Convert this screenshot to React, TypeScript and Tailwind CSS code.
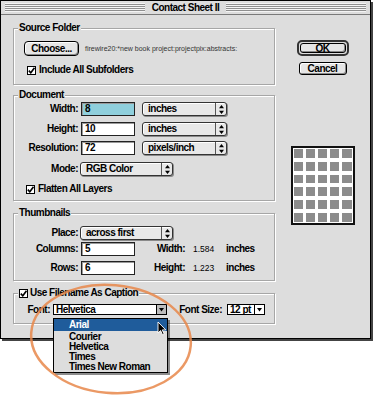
import React from 'react';

const stripes =
  'bg-[repeating-linear-gradient(to_bottom,#f4f4f4_0px,#f4f4f4_1px,#8f8f8f_1px,#8f8f8f_2px)]';

function Check() {
  return (
    <span className="flex h-[9px] w-[9px] shrink-0 items-center justify-center border border-black bg-white">
      <svg width="7" height="7" viewBox="0 0 7 7">
        <path d="M0.8 3.6 L2.8 5.8 L6.5 0.8" stroke="black" strokeWidth="1.6" fill="none" />
      </svg>
    </span>
  );
}

function UpDown() {
  return (
    <svg width="5" height="9" viewBox="0 0 5 9">
      <path d="M2.5 0 L5 3.2 H0 Z M0 5.8 H5 L2.5 9 Z" fill="black" />
    </svg>
  );
}

function DownArrow() {
  return (
    <svg width="5" height="4" viewBox="0 0 5 4">
      <path d="M0 0 H5 L2.5 3.5 Z" fill="black" />
    </svg>
  );
}

function Popup({ value, width }: { value: string; width: string }) {
  return (
    <div
      className={`flex h-[14px] ${width} items-stretch rounded-[3px] border border-[#333] bg-[#e8e8e8] shadow-[1px_1px_0_#8a8a8a,inset_1px_1px_0_#fff]`}
    >
      <span className="flex-1 overflow-hidden whitespace-nowrap pl-[5px] leading-[12px]">{value}</span>
      <span className="flex w-[11px] items-center justify-center border-l border-[#555]">
        <UpDown />
      </span>
    </div>
  );
}

function Field({ value, blue }: { value: string; blue?: boolean }) {
  return (
    <div
      className={`h-[14px] w-[54px] border border-[#222] pl-[3px] leading-[12px] shadow-[inset_1px_1px_0_#9a9a9a] ${
        blue ? 'bg-[#8fcfdc]' : 'bg-white'
      }`}
    >
      {value}
    </div>
  );
}

function Group({
  legend,
  className = '',
  children
}: {
  legend: React.ReactNode;
  className?: string;
  children: React.ReactNode;
}) {
  return (
    <fieldset
      className={`border border-[#a6a6a6] p-0 shadow-[inset_1px_1px_0_#fff,1px_1px_0_#fff] ${className}`}
    >
      <legend className="ml-[4px] bg-[#dddddd] px-[1px] leading-[12px]">{legend}</legend>
      {children}
    </fieldset>
  );
}

function Row({ label, children, className = '' }: { label: string; children: React.ReactNode; className?: string }) {
  return (
    <div className={`flex h-[14px] items-center ${className}`}>
      <span className="w-[64px] text-right">{label}</span>
      {children}
    </div>
  );
}

export default function App() {
  return (
    <div className="relative h-[395px] w-[376px] overflow-hidden bg-white font-['Liberation_Sans',Arial,sans-serif] text-[10px] font-bold leading-[12px] tracking-[-0.5px] text-black">
      <div className="flex h-[339px] w-[371px] flex-col border border-black bg-[#dddddd] shadow-[2px_2px_0_#444]">
        {/* title bar */}
        <div className="flex h-[14px] items-center gap-[5px] border-b border-[#7a7a7a] px-[4px]">
          <div className={`h-[9px] flex-1 ${stripes}`} />
          <span className="px-[2px]">Contact Sheet II</span>
          <div className={`h-[9px] flex-1 ${stripes}`} />
        </div>

        <div className="flex flex-1 pl-[12px] pt-[7px]">
          <div className="flex w-[262px] flex-col">
            {/* Source Folder */}
            <Group legend="Source Folder">
              <div className="px-[10px] pb-[8px] pt-[7px]">
                <div className="flex items-center">
                  <button className="h-[15px] w-[55px] rounded-[4px] border border-black bg-[#e6e6e6] leading-[12px] shadow-[inset_-1px_-1px_0_#8a8a8a,inset_1px_1px_0_#fff]">
                    Choose...
                  </button>
                  <span className="ml-[6px] whitespace-nowrap text-[7px] font-normal tracking-normal text-[#333]">
                    firewire20:*new book project:projectpix:abstracts:
                  </span>
                </div>
                <div className="ml-[3px] mt-[8px] flex h-[12px] items-center gap-[3px]">
                  <Check />
                  <span>Include All Subfolders</span>
                </div>
              </div>
            </Group>

            {/* Document */}
            <Group legend="Document" className="mt-[4px]">
              <div className="pb-[5px] pt-[1px]">
                <Row label="Width:">
                  <span className="ml-[3px]">
                    <Field value="8" blue />
                  </span>
                  <span className="ml-[7px]">
                    <Popup value="inches" width="w-[85px]" />
                  </span>
                </Row>
                <Row label="Height:" className="mt-[6px]">
                  <span className="ml-[3px]">
                    <Field value="10" />
                  </span>
                  <span className="ml-[7px]">
                    <Popup value="inches" width="w-[85px]" />
                  </span>
                </Row>
                <Row label="Resolution:" className="mt-[5px]">
                  <span className="ml-[3px]">
                    <Field value="72" />
                  </span>
                  <span className="ml-[7px]">
                    <Popup value="pixels/inch" width="w-[85px]" />
                  </span>
                </Row>
                <Row label="Mode:" className="mt-[7px]">
                  <span className="ml-[2px]">
                    <Popup value="RGB Color" width="w-[93px]" />
                  </span>
                </Row>
                <div className="ml-[12px] mt-[7px] flex h-[12px] items-center gap-[3px]">
                  <Check />
                  <span>Flatten All Layers</span>
                </div>
              </div>
            </Group>

            {/* Thumbnails */}
            <Group legend="Thumbnails" className="mt-[6px]">
              <div className="pb-[5px] pt-[7px]">
                <Row label="Place:">
                  <span className="ml-[2px]">
                    <Popup value="across first" width="w-[93px]" />
                  </span>
                </Row>
                <Row label="Columns:" className="mt-[2px]">
                  <span className="ml-[3px]">
                    <Field value="5" />
                  </span>
                  <span className="w-[50px] text-right">Width:</span>
                  <span className="ml-[8px] w-[33px] text-[8.5px] font-normal tracking-normal">1.584</span>
                  <span>inches</span>
                </Row>
                <Row label="Rows:" className="mt-[5px]">
                  <span className="ml-[3px]">
                    <Field value="6" />
                  </span>
                  <span className="w-[50px] text-right">Height:</span>
                  <span className="ml-[8px] w-[33px] text-[8.5px] font-normal tracking-normal">1.223</span>
                  <span>inches</span>
                </Row>
              </div>
            </Group>

            {/* Caption */}
            <Group
              className="mt-[6px]"
              legend={
                <span className="flex items-center gap-[2px]">
                  <Check />
                  <span>Use Filename As Caption</span>
                </span>
              }
            >
              <div className="flex h-[11px] items-center pb-[8px] pt-[5px]" style={{ boxSizing: 'content-box' }}>
                <span className="w-[36px] text-right">Font:</span>
                <div className="ml-[3px] flex h-[11px] w-[114px] items-stretch border border-black bg-white">
                  <span className="flex-1 pl-[2px] leading-[9px]">Helvetica</span>
                  <span className="flex w-[10px] items-center justify-center border-l border-black bg-[#bdbdbd]">
                    <DownArrow />
                  </span>
                </div>
                <span className="w-[55px] text-right">Font Size:</span>
                <div className="ml-[5px] flex h-[11px] w-[38px] items-stretch border border-black bg-white">
                  <span className="flex-1 pl-[2px] leading-[9px]">12 pt</span>
                  <span className="flex w-[10px] items-center justify-center border-l border-black">
                    <DownArrow />
                  </span>
                </div>
              </div>
            </Group>
          </div>

          {/* right column */}
          <div className="flex flex-1 flex-col items-center pt-[18px]">
            <div className="flex h-[16px] w-[52px] rounded-[5px] border-[2px] border-[#333] p-[1px]">
              <button className="flex-1 rounded-[3px] border border-black bg-[#e6e6e6] leading-[9px] shadow-[inset_-1px_-1px_0_#8a8a8a]">
                OK
              </button>
            </div>
            <button className="mt-[6px] h-[13px] w-[48px] rounded-[3px] border border-black bg-[#e6e6e6] leading-[10px] shadow-[inset_-1px_-1px_0_#8a8a8a,inset_1px_1px_0_#fff]">
              Cancel
            </button>
            <div className="mt-[71px] grid h-[79px] w-[64px] grid-cols-5 grid-rows-6 gap-x-[2.5px] gap-y-[4px] border-2 border-[#111] bg-white p-[1px]">
              {Array.from({ length: 30 }).map((_, i) => (
                <div key={i} className="bg-[#8c8c8c]" />
              ))}
            </div>
          </div>
        </div>
      </div>

      {/* open font menu */}
      <div className="absolute left-[53px] top-[318px] h-[55px] w-[115px] overflow-hidden border border-black bg-[#dddddd] shadow-[2px_2px_0_rgba(0,0,0,0.45)]">
        <div className="h-[12px] bg-[#1f5c9b] pl-[15px] leading-[12px] text-white">Arial</div>
        <div className="h-[10px] pl-[15px] leading-[11px]">Courier</div>
        <div className="h-[10px] pl-[15px] leading-[11px]">Helvetica</div>
        <div className="h-[10px] pl-[15px] leading-[11px]">Times</div>
        <div className="h-[11px] pl-[15px] leading-[11px]">Times New Roman</div>
      </div>
      <svg className="absolute left-[157px] top-[321px]" width="10" height="15" viewBox="0 0 10 15">
        <path d="M1 1 L1 12 L3.6 9.5 L5.6 14 L7.2 13.3 L5.3 8.9 L8.8 8.9 Z" fill="black" stroke="white" strokeWidth="0.9" />
      </svg>

      {/* annotation circle */}
      <svg className="pointer-events-none absolute left-0 top-0" width="376" height="395" viewBox="0 0 376 395">
        <ellipse
          cx="111"
          cy="339"
          rx="80"
          ry="54"
          transform="rotate(5 111 339)"
          fill="none"
          stroke="#e8874a"
          strokeWidth="2.5"
          opacity="0.85"
        />
      </svg>
    </div>
  );
}
